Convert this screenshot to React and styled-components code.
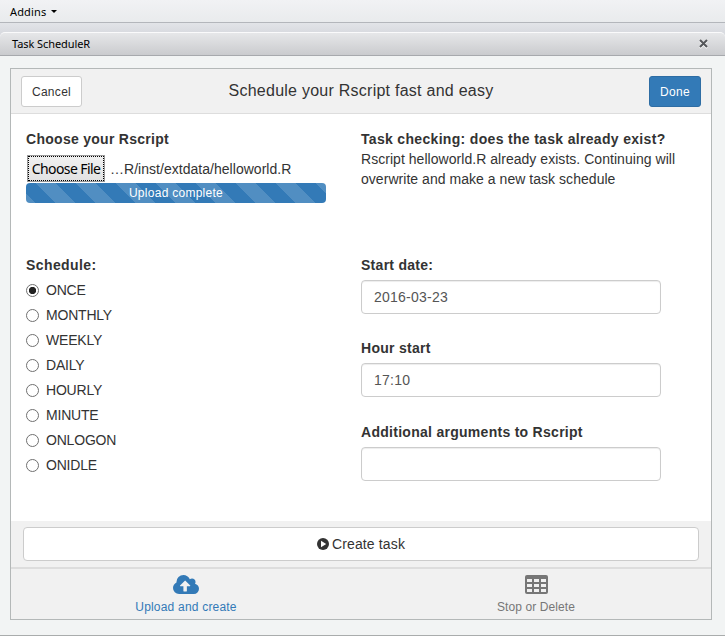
import React, { useState } from "react";
import styled, { createGlobalStyle } from "styled-components";

const GlobalStyle = createGlobalStyle`
  *, *::before, *::after { box-sizing: border-box; }
  body { margin: 0; background: #f2f4f4; overflow: hidden; }
  button, input { font: inherit; }
`;

const Window = styled.div`
  display: flex;
  flex-direction: column;
  height: 636px;
  background: #f2f4f4;
  border-bottom: 1px solid #a9acac;
  color: #333;
  font: 14px/20px "Liberation Sans", Arial, sans-serif;
`;

const MenuBar = styled.div`
  display: flex;
  align-items: center;
  gap: 5px;
  height: 23px;
  padding: 1px 10px 0;
  color: #000;
  font: 11px/16px "Noto Sans", sans-serif;
  background: linear-gradient(#f1f2f4, #e9ebed);
  border-bottom: 1px solid #b3b6bb;
`;

const MenuText = styled.span`
  letter-spacing: ${(p) => p.$spacing || 0};
`;

const Caret = styled.span`
  border: 3px solid transparent;
  border-top-color: #000;
  border-bottom: 0;
`;

const TitleGap = styled.div`
  height: 33px;
  padding-top: 9px;
  background: linear-gradient(#e2e4e8 0, #d9dbe0 9px);
`;

const TitleBar = styled.div`
  display: flex;
  align-items: center;
  justify-content: space-between;
  height: 24px;
  padding: 0 16px 0 12px;
  color: #000;
  font: 11px/16px "Noto Sans", sans-serif;
  background: linear-gradient(#e6e7e9, #cacbce);
  border-top: 1px solid #fafafb;
  border-bottom: 1px solid #a7a9ad;
  border-radius: 5px 5px 0 0;
`;

const Gadget = styled.main`
  display: flex;
  flex-direction: column;
  width: 702px;
  height: 552px;
  margin: 12px 0 0 10px;
  background: #fff;
  border: 1px solid #b4b8b8;
`;

const GadgetHeader = styled.header`
  display: flex;
  align-items: center;
  justify-content: space-between;
  height: 45px;
  padding: 0 10px;
  background: #f1f1f1;
  border-bottom: 1px solid #ddd;
`;

const Heading = styled.h1`
  margin: 0 9px 1px 0;
  font-size: 16px;
  font-weight: 400;
  letter-spacing: 0.25px;
`;

const HeaderButton = styled.button`
  width: ${(p) => p.$width};
  height: 31px;
  padding: 1px 0 0;
  font-size: 12px;
  letter-spacing: 0.3px;
  color: ${(p) => (p.$primary ? "#fff" : "#333")};
  background: ${(p) => (p.$primary ? "#337ab7" : "#fff")};
  border: 1px solid ${(p) => (p.$primary ? "#2e6da4" : "#ccc")};
  border-radius: 3px;
`;

const Content = styled.div`
  display: grid;
  grid-template-columns: 300px 320px;
  grid-template-rows: 126px 1fr;
  column-gap: 35px;
  height: 407px;
  padding: 15px 15px 0;
`;

const Section = styled.section`
  display: flex;
  flex-direction: column;
  align-items: flex-start;
`;

const Label = styled.div`
  font-weight: 700;
  white-space: nowrap;
  letter-spacing: ${(p) => p.$spacing || "0.28px"};
`;

const FileRow = styled.div`
  display: flex;
  align-items: center;
  gap: 5px;
  height: 27px;
  margin: 6px 0 1px 1px;
  letter-spacing: 0.03px;
  white-space: nowrap;
`;

const FileButton = styled.button`
  width: 78px;
  height: 27px;
  padding: 0;
  color: #000;
  font-family: "Noto Sans", sans-serif;
  letter-spacing: -0.6px;
  background: linear-gradient(#f0f0f0, #e2e2e2);
  border: 1px solid #999;
  outline: 1px dotted #000;
  outline-offset: -2px;
`;

const Progress = styled.div`
  width: 300px;
  height: 20px;
  color: #fff;
  font-size: 12px;
  letter-spacing: 0.27px;
  line-height: 20px;
  text-align: center;
  border-radius: 4px;
  background-color: #337ab7;
  background-image: linear-gradient(
    45deg,
    rgba(255, 255, 255, 0.15) 25%,
    transparent 25%,
    transparent 50%,
    rgba(255, 255, 255, 0.15) 50%,
    rgba(255, 255, 255, 0.15) 75%,
    transparent 75%,
    transparent
  );
  background-size: 40px 40px;
  background-position: 10px 0;
`;

const Message = styled.p`
  margin: 0;
  letter-spacing: 0.04px;
`;

const Option = styled.label`
  display: flex;
  align-items: center;
  gap: 7px;
  height: 20px;
  margin-top: 5px;
  letter-spacing: -0.2px;
`;

const Radio = styled.input`
  appearance: none;
  width: 13px;
  height: 13px;
  margin: 1px 0 0;
  border: 1px solid #707070;
  border-radius: 50%;
  background: #fff;
  &:checked {
    background: radial-gradient(circle, #222 3.3px, #fff 4px);
  }
`;

const Field = styled.div`
  height: ${(p) => p.$height};
`;

const TextInput = styled.input`
  display: block;
  width: 300px;
  height: 34px;
  margin-top: 5px;
  padding: 6px 12px;
  color: #555;
  letter-spacing: 0.24px;
  border: 1px solid #ccc;
  border-radius: 4px;
  box-shadow: inset 0 1px 1px rgba(0, 0, 0, 0.075);
  outline: none;
`;

const ActionBar = styled.div`
  height: 48px;
  padding: 6px 12px;
  background: #f1f1f1;
  border-bottom: 2px solid #ddd;
`;

const CreateButton = styled.button`
  display: flex;
  align-items: center;
  justify-content: center;
  gap: 3px;
  width: 676px;
  height: 34px;
  color: #333;
  letter-spacing: 0.15px;
  background: #fff;
  border: 1px solid #ccc;
  border-radius: 4px;
`;

const Tabs = styled.nav`
  display: grid;
  grid-template-columns: 1fr 1fr;
  flex: 1;
  background: #f1f1f1;
`;

const Tab = styled.button`
  display: flex;
  flex-direction: column;
  align-items: center;
  gap: 5px;
  padding: 6px 0 0;
  color: ${(p) => (p.$active ? "#337ab7" : "#777")};
  font-size: 12px;
  line-height: 16px;
  letter-spacing: ${(p) => p.$spacing};
  background: none;
  border: 0;
`;

const CloseIcon = () => (
  <svg width="11" height="10" viewBox="0 0 11 10">
    <path d="M2 2l7 7M9 2l-7 7" stroke="#fff" strokeWidth="2" />
    <path d="M2 1l7 7M9 1l-7 7" stroke="#55575a" strokeWidth="2" />
  </svg>
);

const PlayIcon = () => (
  <svg width="12" height="12" viewBox="0 0 12 12">
    <circle cx="6" cy="6" r="6" fill="#333" />
    <path d="M4 2.800v6.400L9.200 6z" fill="#fff" />
  </svg>
);

const CloudUploadIcon = () => (
  <svg width="26" height="19" viewBox="0 128 1920 1408" preserveAspectRatio="none" fill="currentColor">
    <path d="M1280 928q0-14-9-23l-352-352q-9-9-23-9t-23 9l-351 351q-10 12-10 24 0 14 9 23t23 9h224v352q0 13 9.500 22.500t22.500 9.500h192q13 0 22.500-9.500t9.500-22.500v-352h224q13 0 22.500-9.500t9.500-22.500zm640 224q0 159-112.500 271.500t-271.500 112.500h-1088q-185 0-316.500-131.500t-131.500-316.500q0-130 70-240t188-165q-2-30-2-43 0-212 150-362t362-150q156 0 285.500 87t188.500 231q71-62 166-62 106 0 181 75t75 181q0 76-41 138 130 31 213.500 135.500t83.500 238.500z" />
  </svg>
);

const TableIcon = () => (
  <svg width="23" height="19" viewBox="0 0 23 19">
    <rect width="23" height="19" rx="2" fill="currentColor" />
    <g fill="#f1f1f1">
      {[4, 9, 14].map((y) =>
        [2, 9, 16].map((x) => <rect key={`${x}-${y}`} x={x} y={y} width="5" height="3" />)
      )}
    </g>
  </svg>
);

const SCHEDULES = ["ONCE", "MONTHLY", "WEEKLY", "DAILY", "HOURLY", "MINUTE", "ONLOGON", "ONIDLE"];

export default function App() {
  const [schedule, setSchedule] = useState("ONCE");
  return (
    <Window>
      <GlobalStyle />
      <MenuBar>
        <MenuText $spacing="0.15px">Addins</MenuText>
        <Caret />
      </MenuBar>
      <TitleGap>
        <TitleBar>
          <MenuText $spacing="-0.08px">Task ScheduleR</MenuText>
          <CloseIcon />
        </TitleBar>
      </TitleGap>
      <Gadget>
        <GadgetHeader>
          <HeaderButton $width="61px">Cancel</HeaderButton>
          <Heading>Schedule your Rscript fast and easy</Heading>
          <HeaderButton $width="52px" $primary>Done</HeaderButton>
        </GadgetHeader>
        <Content>
          <Section>
            <Label>Choose your Rscript</Label>
            <FileRow>
              <FileButton>Choose File</FileButton>
              <span>…R/inst/extdata/helloworld.R</span>
            </FileRow>
            <Progress>Upload complete</Progress>
          </Section>
          <Section>
            <Label $spacing="0.32px">Task checking: does the task already exist?</Label>
            <Message>
              Rscript helloworld.R already exists. Continuing will
              <br />
              overwrite and make a new task schedule
            </Message>
          </Section>
          <Section>
            <Label $spacing="0.4px">Schedule:</Label>
            {SCHEDULES.map((name) => (
              <Option key={name}>
                <Radio
                  type="radio"
                  name="schedule"
                  checked={schedule === name}
                  onChange={() => setSchedule(name)}
                />
                {name}
              </Option>
            ))}
          </Section>
          <Section>
            <Field $height="83px">
              <Label>Start date:</Label>
              <TextInput defaultValue="2016-03-23" />
            </Field>
            <Field $height="84px">
              <Label>Hour start</Label>
              <TextInput defaultValue="17:10" />
            </Field>
            <Field $height="60px">
              <Label>Additional arguments to Rscript</Label>
              <TextInput />
            </Field>
          </Section>
        </Content>
        <ActionBar>
          <CreateButton>
            <PlayIcon />
            <span>Create task</span>
          </CreateButton>
        </ActionBar>
        <Tabs>
          <Tab $active $spacing="0.2px">
            <CloudUploadIcon />
            Upload and create
          </Tab>
          <Tab $spacing="0.1px">
            <TableIcon />
            Stop or Delete
          </Tab>
        </Tabs>
      </Gadget>
    </Window>
  );
}
